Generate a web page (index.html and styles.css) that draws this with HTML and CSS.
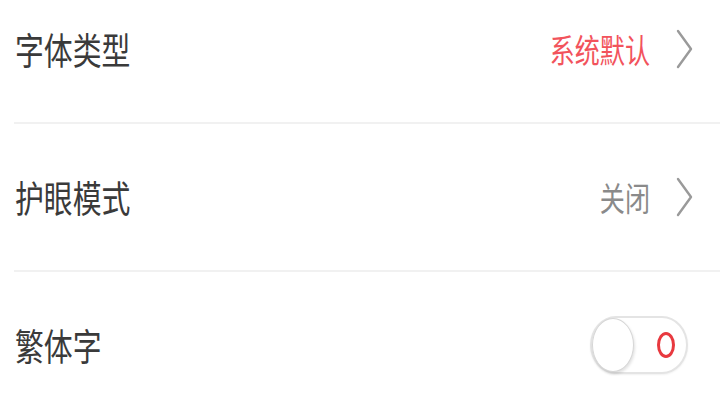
FILE: index.html
```html
<!DOCTYPE html>
<html lang="zh-CN">
<head>
<meta charset="utf-8">
<link rel="stylesheet" href="styles.css">
</head>
<body>
<div class="list">
  <div class="row">
    <span class="label">字体类型</span>
    <div class="right">
      <span class="value red">系统默认</span>
      <svg class="chev" viewBox="0 0 18 40" width="18" height="40"><polyline points="2,2 15,20 2,38" fill="none" stroke="#9a9a9a" stroke-width="2.4" stroke-linecap="round" stroke-linejoin="round"/></svg>
    </div>
  </div>
  <div class="row">
    <span class="label">护眼模式</span>
    <div class="right">
      <span class="value">关闭</span>
      <svg class="chev" viewBox="0 0 18 40" width="18" height="40"><polyline points="2,2 15,20 2,38" fill="none" stroke="#9a9a9a" stroke-width="2.4" stroke-linecap="round" stroke-linejoin="round"/></svg>
    </div>
  </div>
  <div class="row">
    <span class="label">繁体字</span>
    <div class="right">
      <div class="toggle">
        <div class="knob"></div>
        <div class="ring"></div>
      </div>
    </div>
  </div>
</div>
</body>
</html>
```
FILE: styles.css
```css
* { box-sizing: border-box; }
html, body { margin: 0; padding: 0; background: #ffffff; }
body {
  width: 720px;
  height: 418px;
  overflow: hidden;
  font-family: "Noto Sans CJK SC", "Noto Sans", sans-serif;
}
.list { margin-top: -24px; }
.row {
  height: 148px;
  margin-left: 14px;
  padding-right: 26px;
  display: flex;
  align-items: center;
  justify-content: space-between;
  border-bottom: 2px solid #f1f1f1;
}
.label {
  display: inline-block;
  font-size: 37px;
  line-height: 1;
  color: #3a3a3a;
  transform: scaleX(0.78);
  transform-origin: left center;
  margin-left: 1px;
}
.right {
  display: flex;
  align-items: center;
}
.value {
  display: inline-block;
  font-size: 33px;
  line-height: 1;
  color: #8a8a8a;
  transform: scaleX(0.76);
  transform-origin: right center;
  margin-right: 26px;
}
.value.red { color: #f2535c; }
.chev { display: block; }
.toggle {
  width: 98px;
  height: 58px;
  margin-right: 6px;
  border: 2px solid #e4e4e4;
  border-radius: 26px / 29px;
  background: #ffffff;
  display: flex;
  align-items: center;
  justify-content: space-between;
  padding: 0 11px 0 0;
  box-shadow: 0 1px 2px rgba(0,0,0,0.06);
}
.knob {
  width: 42px;
  height: 54px;
  border-radius: 50%;
  background: #ffffff;
  border: 1px solid #d6d6d6;
  box-shadow: 1px 2px 3px rgba(0,0,0,0.12);
}
.ring {
  width: 18px;
  height: 26px;
  border: 3px solid #e8393f;
  border-radius: 50%;
}
```
